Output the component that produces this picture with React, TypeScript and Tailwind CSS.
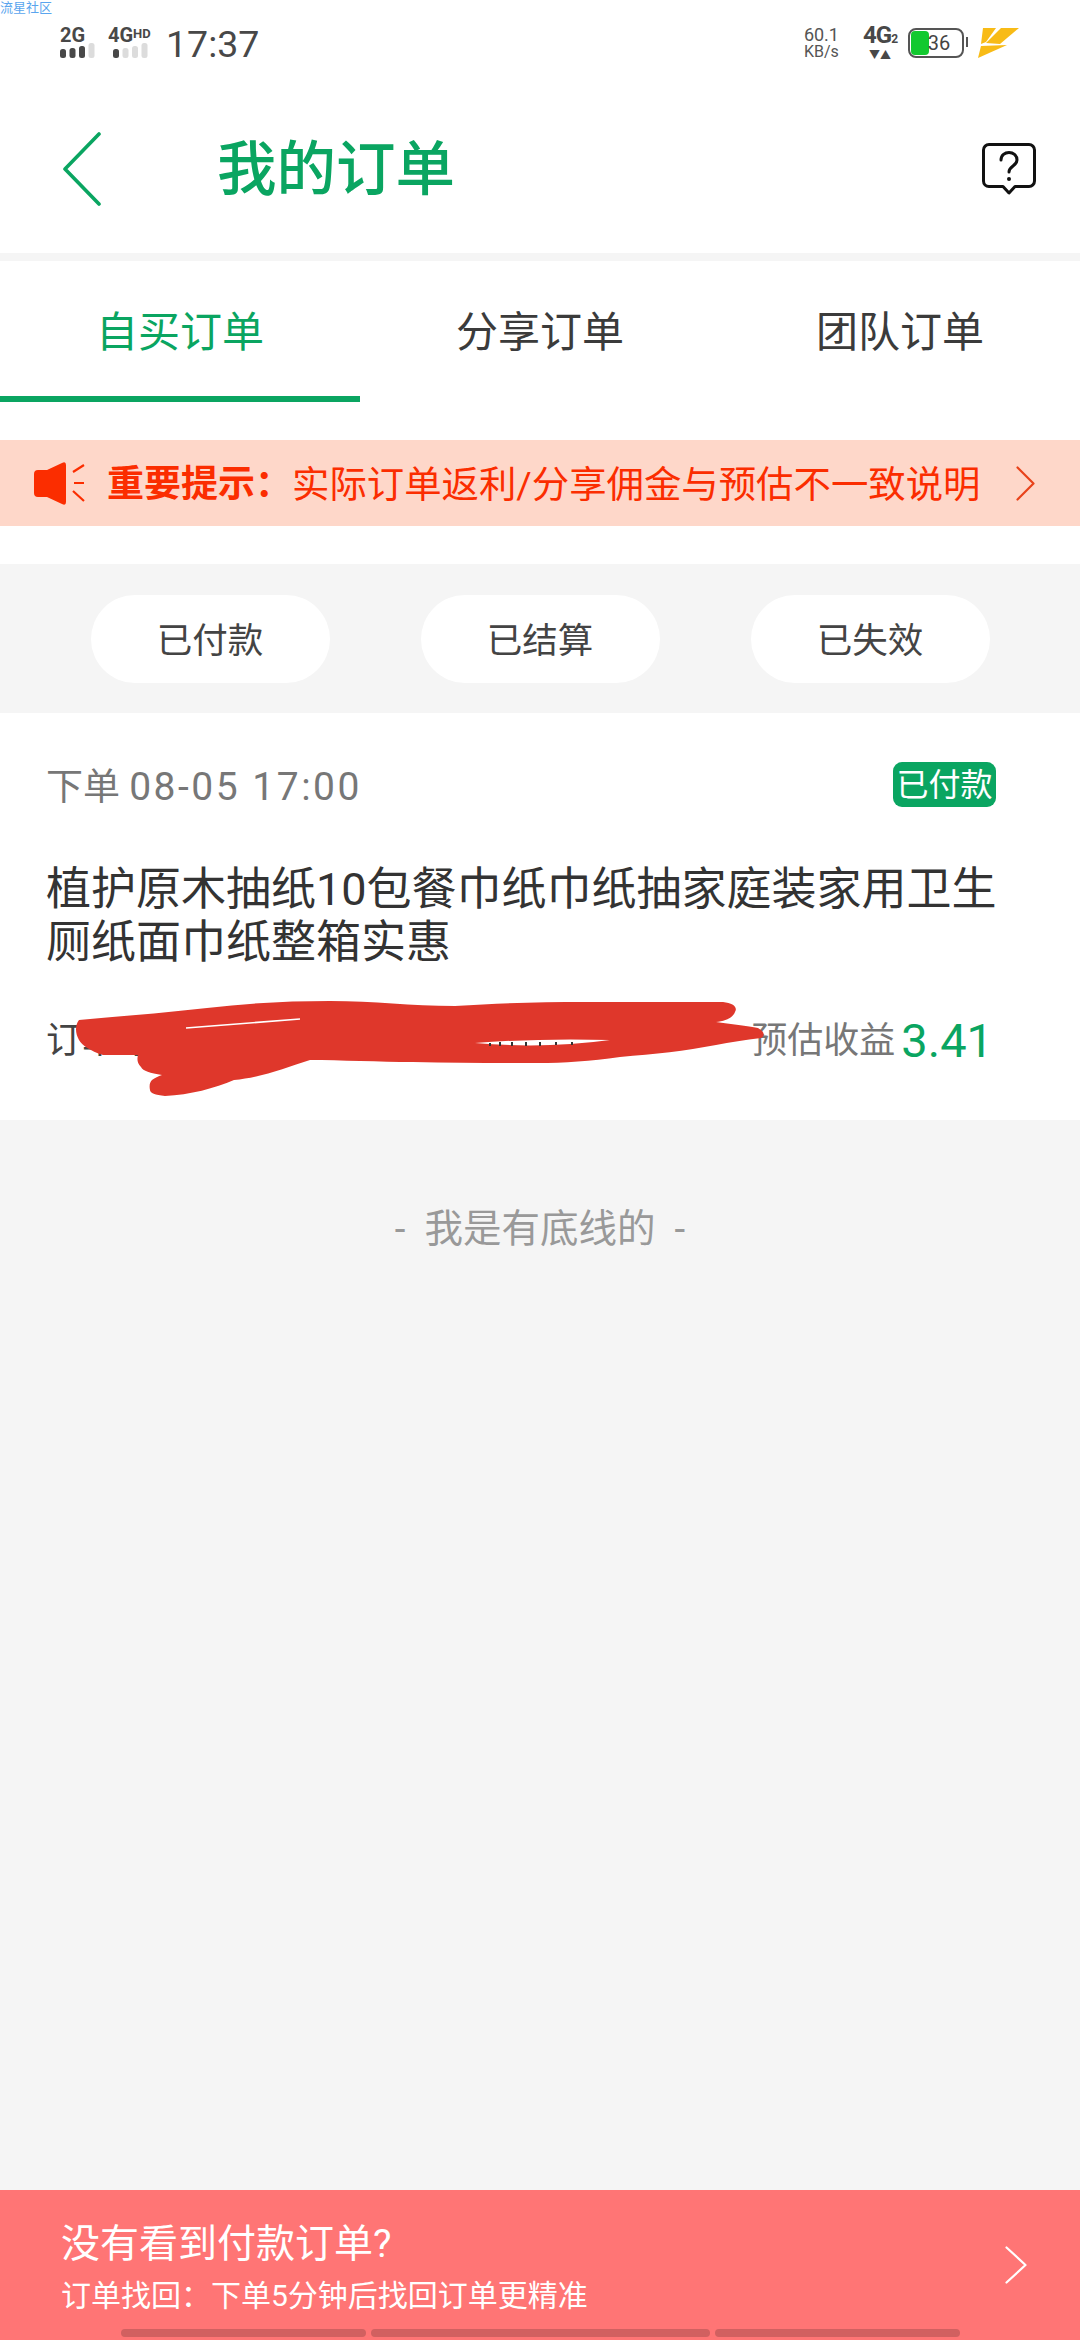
import React from 'react';

const SignalBars = ({ active }: { active: number }) => (
    <svg width="36" height="15" viewBox="0 0 36 15">
        {[0, 1, 2, 3].map((i) => (
            <rect
                key={i}
                x={i * 9.5}
                y={i === 0 ? 6 : i === 1 ? 5 : i === 2 ? 3 : 0}
                width="6"
                height={i === 0 ? 9 : i === 1 ? 10 : i === 2 ? 12 : 15}
                rx="2.5"
                fill={i < active ? '#484848' : '#dcdcdc'}
            />
        ))}
    </svg>
);

const Chevron = ({ color, w, h }: { color: string; w: number; h: number }) => (
    <svg width={w} height={h} viewBox={`0 0 ${w} ${h}`} fill="none">
        <path d={`M1.5 1.5 L${w - 1.5} ${h / 2} L1.5 ${h - 1.5}`} stroke={color} strokeWidth="2.2" strokeLinecap="round" strokeLinejoin="round" />
    </svg>
);

const Tab = ({ label, active }: { label: string; active?: boolean }) => (
    <div className={`flex-1 h-[141px] pt-[8px] flex items-center justify-center text-[42px] border-b-[6px] ${active ? 'text-[#0aa561] border-[#0aa561]' : 'text-[#3b3b3b] border-transparent'}`}>
        {label}
    </div>
);

const Pill = ({ label }: { label: string }) => (
    <div className="w-[239px] h-[88px] pt-[6px] rounded-[44px] bg-white flex items-center justify-center text-[35.5px] text-[#444444]">
        {label}
    </div>
);

const App: React.FC = () => {
    return (
        <div className="relative w-[1080px] h-[2340px] bg-[#f5f5f5] flex flex-col overflow-hidden font-['Roboto','Noto_Sans_CJK_SC',sans-serif]">
            <span className="absolute left-0 top-0 text-[13px] leading-[15px] text-[#5aa5ee]">流星社区</span>

            {/* Status bar */}
            <div className="h-[85px] bg-white flex items-center pl-[60px] pr-[61px]">
                <div className="flex flex-col w-[36px]">
                    <span className="text-[20px] leading-[15px] font-bold text-[#484848]">2G</span>
                    <SignalBars active={3} />
                </div>
                <div className="flex flex-col w-[46px] ml-[12px]">
                    <span className="text-[20px] leading-[15px] font-bold text-[#484848] whitespace-nowrap">
                        4G<span className="text-[13px] align-top leading-[12px]">HD</span>
                    </span>
                    <div className="ml-[5px]"><SignalBars active={1} /></div>
                </div>
                <span className="ml-[12px] pt-[3px] text-[37.5px] text-[#484848]">17:37</span>
                <div className="ml-auto flex items-center">
                    <div className="flex flex-col items-center text-[#555555]">
                        <span className="text-[18px] leading-[18px]">60.1</span>
                        <span className="text-[16px] leading-[16px]">KB/s</span>
                    </div>
                    <div className="ml-[24px] w-[34px] flex flex-col items-center text-[#484848]">
                        <span className="text-[24px] leading-[22px] font-bold whitespace-nowrap tracking-[-1px]">4G<span className="text-[12px]">2</span></span>
                        <span className="text-[11px] leading-[10px] mt-[1px]">▼▲</span>
                    </div>
                    <div className="relative ml-[11px] w-[56px] h-[30px] rounded-[8px] border-[2.5px] border-[#555555] flex items-center justify-center">
                        <div className="absolute left-[1px] top-[1px] bottom-[1px] w-[18px] rounded-[4px] bg-[#12c92f]" />
                        <span className="relative text-[20px] leading-none text-[#444444] ml-[6px]">36</span>
                        <div className="absolute right-[-6px] top-[7px] w-[2px] h-[10px] bg-[#555555]" />
                    </div>
                    <svg className="ml-[14px]" width="41" height="30" viewBox="0 0 41 30">
                        <path d="M5 0 L18 0 L8 14 L3 16 Z" fill="#f8bb16" />
                        <path d="M23 0 L41 0 L22 16 L8 15 Z" fill="#f8bb16" />
                        <path d="M3 18 L29 17 L0 30 Z" fill="#f8bb16" />
                    </svg>
                </div>
            </div>

            {/* Header */}
            <div className="h-[168px] bg-white flex items-center pl-[62px] pr-[44px]">
                <svg width="40" height="74" viewBox="0 0 40 74" fill="none">
                    <path d="M37 2 L3 37 L37 72" stroke="#0aa561" strokeWidth="3.6" strokeLinecap="round" strokeLinejoin="round" />
                </svg>
                <h1 className="ml-[115px] pt-[4px] text-[59.5px] font-medium text-[#0aa561]">我的订单</h1>
                <svg className="ml-auto" width="54" height="52" viewBox="0 0 54 52" fill="none">
                    <path d="M7 1.5 H47 A5.5 5.5 0 0 1 52.5 7 V38 A5.5 5.5 0 0 1 47 43.5 H33 L27 50 L21 43.5 H7 A5.5 5.5 0 0 1 1.5 38 V7 A5.5 5.5 0 0 1 7 1.5 Z" stroke="#111111" strokeWidth="3" strokeLinejoin="round" />
                    <path d="M19 17 C19 7 35 7 35 17 C35 23 27 23 27 29" stroke="#111111" strokeWidth="3" strokeLinecap="round" />
                    <circle cx="27" cy="36" r="2" fill="#111111" />
                </svg>
            </div>

            <div className="h-[8px] bg-[#f5f5f5]" />

            {/* Tabs */}
            <div className="flex bg-white">
                <Tab label="自买订单" active />
                <Tab label="分享订单" />
                <Tab label="团队订单" />
            </div>

            {/* Notice */}
            <div className="bg-white pt-[38px] pb-[38px]">
                <div className="h-[86px] bg-[#fed7c9] flex items-center pl-[34px] pr-[45px] text-[#fb2d00]">
                    <svg width="52" height="43" viewBox="0 0 52 43" fill="none">
                        <path d="M4 8 H13 L28 1 Q32 -1 32 3 V40 Q32 44 28 42 L13 35 H4 Q0 35 0 31 V12 Q0 8 4 8 Z" fill="#fb2d00" />
                        <path d="M39 10 L50 3 M40 21 H50 M39 29 L50 39" stroke="#fb2d00" strokeWidth="2.2" />
                    </svg>
                    <span className="ml-[21px] pt-[4px] text-[37px] font-bold whitespace-nowrap">重要提示：</span>
                    <span className="pt-[4px] text-[37.4px] whitespace-nowrap">实际订单返利/分享佣金与预估不一致说明</span>
                    <div className="ml-auto"><Chevron color="#e8421a" w={19} h={35} /></div>
                </div>
            </div>

            {/* Status filters */}
            <div className="h-[149px] flex items-center justify-center gap-[91px]">
                <Pill label="已付款" />
                <Pill label="已结算" />
                <Pill label="已失效" />
            </div>

            {/* Order card */}
            <div className="relative h-[407px] bg-white px-[46px]">
                <div className="flex items-center justify-between pt-[49px]">
                    <span className="text-[37px] leading-[50px] text-[#777777] whitespace-nowrap">
                        下单 <span className="text-[39px] tracking-[2.5px]">08-05 17:00</span>
                    </span>
                    <span className="mr-[38px] mb-[6px] h-[45px] w-[103px] rounded-[9px] bg-[#0aa561] flex items-center justify-center text-[32px] text-white">已付款</span>
                </div>
                <p className="mt-[50px] text-[45px] leading-[53px] text-[#333333]">植护原木抽纸10包餐巾纸巾纸抽家庭装家用卫生厕纸面巾纸整箱实惠</p>
                <div className="flex items-center mt-[45px]">
                    <span className="text-[36px] text-[#444444]">订单号</span>
                    <span className="ml-auto text-[36px] text-[#777777]">预估收益</span>
                    <span className="ml-[6px] mr-[41px] text-[47px] leading-[54px] text-[#0aa561]">3.41</span>
                </div>
                {/* scribble over the order number */}
                <svg className="absolute left-0 top-0 pointer-events-none" width="1080" height="407" viewBox="0 0 1080 407" fill="none">
                    <path d="M79 307 C120 303 165 300 207 295 C250 290 290 288 330 288 C375 288 410 293 455 293 C500 290 540 289 585 289 L723 289 C733 290 738 294 735 299 C733 305 725 308 716 309 C730 311 748 313 758 315 C765 319 765 323 761 325 C745 327 730 329 716 332 C685 338 655 341 620 344 C590 348 565 350 537 350 C495 350 455 350 413 349 C380 349 340 347 310 347 C285 355 260 365 234 367 C215 375 190 382 165 383 C155 382 150 380 150 377 C149 372 150 369 152 367 C155 365 158 363 162 362 C150 360 143 358 141 354 C137 350 137 346 138 342 L103 342 C90 338 82 332 79 327 C75 320 75 312 79 307 Z" fill="#df372b" />
                    <path d="M186 315 L300 306" stroke="#ffffff" strokeWidth="1.6" />
                    <path d="M475 330 Q540 325 610 327 Q545 336 475 330 Z" fill="#ffffff" />
                    <path d="M490 330 v3 M500 329 v4 M512 329 v4 M526 329 v4 M540 329 v4 M556 329 v3 M572 329 v3" stroke="#333333" strokeWidth="2" />
                </svg>
            </div>

            {/* List end */}
            <div className="flex-1 flex justify-center pt-[80px] text-[38.5px] text-[#999999] whitespace-pre">-  我是有底线的  -</div>

            {/* Footer banner */}
            <div className="relative h-[150px] bg-[#ff7575] flex items-center pl-[61px] pr-[53px] text-white">
                <div className="flex flex-col pt-[2px]">
                    <span className="text-[39px] leading-[60px]">没有看到付款订单?</span>
                    <span className="text-[30px] leading-[44px]">订单找回：下单5分钟后找回订单更精准</span>
                </div>
                <div className="ml-auto"><Chevron color="#ffffff" w={22} h={38} /></div>
                <div className="absolute left-[121px] bottom-[3px] flex gap-[5px] h-[8px]">
                    <div className="w-[245px] rounded-[4px] bg-[#d16060]" />
                    <div className="w-[339px] rounded-[4px] bg-[#d16060]" />
                    <div className="w-[245px] rounded-[4px] bg-[#d16060]" />
                </div>
            </div>
        </div>
    );
};

export default App;
